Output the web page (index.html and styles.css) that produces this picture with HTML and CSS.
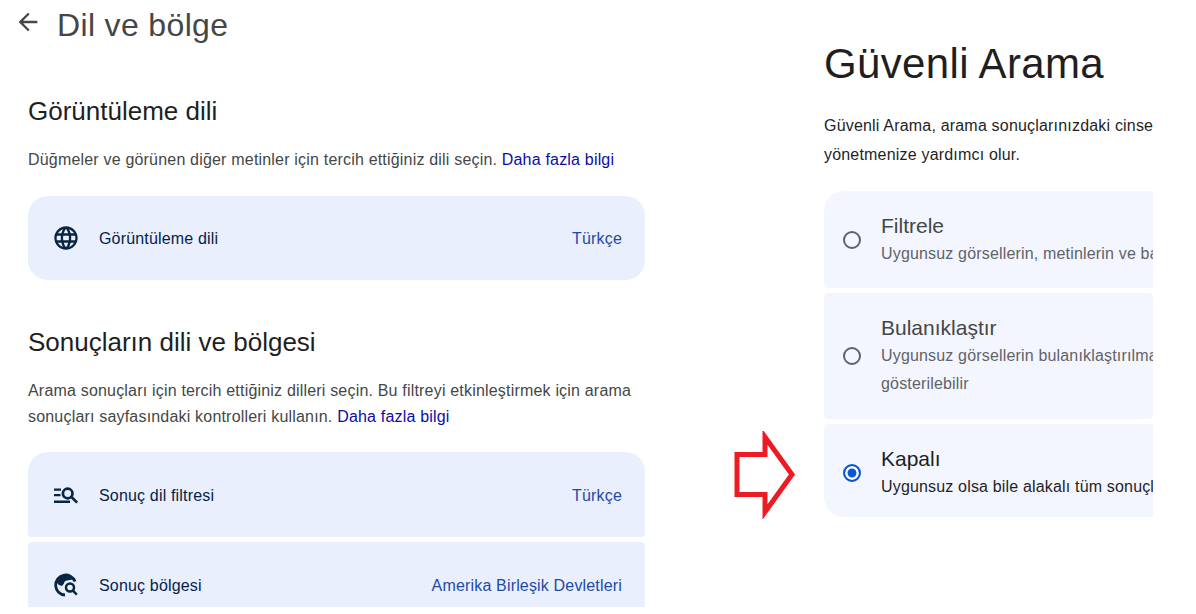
FILE: index.html
```html
<!DOCTYPE html>
<html lang="tr">
<head>
    <meta charset="UTF-8">
    <meta name="viewport" content="width=device-width, initial-scale=1.0">
    <title>Dil ve bölge</title>
    <link rel="stylesheet" href="styles.css">
</head>
<body>

<div class="page">

    <!-- Left: language and region settings -->
    <div class="settings">
        <header class="settings-head">
            <svg class="back-icon" viewBox="0 0 24 24" width="28" height="28"><path d="M20 11H7.830l5.590-5.590L12 4l-8 8 8 8 1.410-1.410L7.830 13H20v-2z"/></svg>
            <h1>Dil ve bölge</h1>
        </header>

        <section class="display-section">
            <h2>Görüntüleme dili</h2>
            <p class="desc">Düğmeler ve görünen diğer metinler için tercih ettiğiniz dili seçin. <a href="#">Daha fazla bilgi</a></p>
            <div class="rows">
                <div class="row row-single">
                    <svg class="row-icon" viewBox="0 0 24 24" width="28" height="28"><path d="M12 2C6.480 2 2 6.480 2 12s4.480 10 10 10 10-4.480 10-10S17.520 2 12 2zm6.930 6h-2.950c-.320-1.250-.780-2.450-1.380-3.560 1.840.630 3.370 1.910 4.330 3.560zM12 4.040c.830 1.200 1.480 2.530 1.910 3.960h-3.820c.430-1.430 1.080-2.760 1.910-3.960zM4.260 14C4.100 13.360 4 12.690 4 12s.100-1.360.260-2h3.380c-.080.660-.140 1.320-.140 2s.060 1.340.140 2H4.260zm.820 2h2.950c.320 1.250.780 2.450 1.380 3.560-1.840-.630-3.370-1.900-4.330-3.560zm2.950-8H5.080c.960-1.660 2.490-2.930 4.330-3.560C8.810 5.550 8.350 6.750 8.030 8zM12 19.960c-.830-1.200-1.480-2.530-1.910-3.960h3.820c-.430 1.430-1.080 2.760-1.910 3.960zM14.340 14H9.660c-.090-.660-.160-1.320-.160-2s.070-1.350.160-2h4.680c.090.650.160 1.320.160 2s-.070 1.340-.160 2zm.250 5.560c.600-1.110 1.060-2.310 1.380-3.560h2.950c-.960 1.650-2.490 2.930-4.330 3.560zM16.360 14c.080-.660.140-1.320.140-2s-.060-1.340-.140-2h3.380c.160.640.260 1.310.260 2s-.100 1.360-.260 2h-3.380z"/></svg>
                    <span class="row-label">Görüntüleme dili</span>
                    <span class="row-value">Türkçe</span>
                </div>
            </div>
        </section>

        <section class="results-section">
            <h2>Sonuçların dili ve bölgesi</h2>
            <p class="desc">Arama sonuçları için tercih ettiğiniz dilleri seçin. Bu filtreyi etkinleştirmek için arama sonuçları sayfasındaki kontrolleri kullanın. <a href="#">Daha fazla bilgi</a></p>
            <div class="rows">
                <div class="row row-first">
                    <svg class="row-icon" viewBox="0 0 28 28" width="28" height="28"><path d="M2 7.500h7v2.300H2zM2 13h6.500v2.300H2zM2 19.500h16v2.500H2z"/><circle cx="15.700" cy="12.500" r="4.800" fill="none" stroke="currentColor" stroke-width="2.700"/><path d="M18.800 17.200l1.900-1.900 5.400 5.400-1.900 1.900z"/></svg>
                    <span class="row-label">Sonuç dil filtresi</span>
                    <span class="row-value">Türkçe</span>
                </div>
                <div class="row">
                    <svg class="row-icon" viewBox="0 0 28 28" width="28" height="28"><path d="M23 10.500A10 10 0 1 0 13 24" fill="none" stroke="currentColor" stroke-width="2.800"/><path d="M6 7.500Q13 1.500 21 8.500L15 9.500Q12.500 9.500 12 12.500L10 15Q6 14 4.500 11.500z"/><circle cx="18" cy="16.500" r="4" fill="none" stroke="currentColor" stroke-width="2.500"/><path d="M20.300 20.800l1.700-1.700 3.700 3.700-1.700 1.700z"/></svg>
                    <span class="row-label">Sonuç bölgesi</span>
                    <span class="row-value">Amerika Birleşik Devletleri</span>
                </div>
            </div>
        </section>
    </div>

    <!-- Red arrow drawn on top of the screenshot -->
    <svg class="arrow" viewBox="0 0 64 88" width="64" height="88"><path d="M4 23.500H32V6L59 43.500 32 81V63.500H4z" fill="none" stroke="#ed1c24" stroke-width="5"/></svg>

    <!-- Right: safe search -->
    <div class="safe">
        <h1>Güvenli Arama</h1>
        <p class="desc safe-desc">Güvenli Arama, arama sonuçlarınızdaki cinsel içerikli görselleri, videoları ve metinleri<br>yönetmenize yardımcı olur.</p>
        <div class="options">
            <div class="option option-first">
                <span class="radio"></span>
                <div class="option-text">
                    <div class="option-title">Filtrele</div>
                    <div class="option-sub">Uygunsuz görsellerin, metinlerin ve bağlantıların filtrelenmesini sağlar</div>
                </div>
            </div>
            <div class="option option-mid">
                <span class="radio"></span>
                <div class="option-text">
                    <div class="option-title">Bulanıklaştır</div>
                    <div class="option-sub">Uygunsuz görsellerin bulanıklaştırılmasını sağlar ancak<br>gösterilebilir</div>
                </div>
            </div>
            <div class="option option-last selected">
                <span class="radio"></span>
                <div class="option-text">
                    <div class="option-title">Kapalı</div>
                    <div class="option-sub">Uygunsuz olsa bile alakalı tüm sonuçları gösterir</div>
                </div>
            </div>
        </div>
    </div>

</div>

</body>
</html>
```

FILE: styles.css
```css
* {
    box-sizing: border-box;
}

body {
    margin: 0;
    background-color: white;
    font-family: "Liberation Sans", Arial, sans-serif;
}

.page {
    position: relative;
    display: flex;
    height: 607px;
    overflow: hidden;
}

h1, h2, p {
    margin: 0;
    font-weight: normal;
}

/* Left column */
.settings {
    width: 824px;
    padding-left: 28px;
    padding-right: 179px;
    flex-shrink: 0;
}

.settings-head {
    display: flex;
    align-items: center;
    height: 50px;
    margin-left: -14px;
}

.back-icon {
    fill: #444746;
    margin-right: 15px;
    margin-top: -7px;
}

.settings-head h1 {
    font-size: 32px;
    letter-spacing: .35px;
    line-height: 50px;
    color: #444746;
}

.display-section {
    padding-top: 45px;
}

.results-section {
    padding-top: 46px;
}

h2 {
    font-size: 26px;
    line-height: 32px;
    color: #1f1f1f;
}

.desc {
    font-size: 16px;
    letter-spacing: .19px;
    line-height: 26px;
    color: #444746;
    margin-top: 20px;
}

.desc a {
    color: #0b0da8;
    text-decoration: none;
}

.rows {
    display: flex;
    flex-direction: column;
    gap: 5px;
    margin-top: 23px;
}

.results-section .rows {
    margin-top: 22px;
}

.row {
    display: flex;
    align-items: center;
    height: 85px;
    padding: 0 23px 0 24px;
    background-color: #e9effd;
    border-radius: 4px;
    color: #041e49;
    font-size: 16px;
    letter-spacing: .17px;
}

.row-single {
    height: 84px;
    border-radius: 20px;
}

.row-first {
    border-radius: 20px 20px 4px 4px;
}

.row-icon {
    color: #0a2540;
    fill: currentColor;
    margin-right: 19px;
    flex-shrink: 0;
}

.row-label {
    flex: 1;
    padding-top: 2px;
}

.row-value {
    padding-top: 2px;
    color: #1f4aa8;
}

/* Right column */
.safe {
    width: 329px;
    overflow: hidden;
    flex-shrink: 0;
}

.safe h1 {
    font-size: 42px;
    letter-spacing: .35px;
    line-height: 52px;
    color: #1f1f1f;
    margin-top: 38px;
}

.safe-desc {
    margin-top: 21px;
    line-height: 29px;
    white-space: nowrap;
    color: #1f1f1f;
}

.options {
    display: flex;
    flex-direction: column;
    gap: 5px;
    margin-top: 22px;
}

.option {
    display: flex;
    align-items: center;
    width: 329px;
    background-color: #f4f6ff;
    border-radius: 4px;
    padding-left: 19px;
}

.option-first {
    height: 97px;
    border-radius: 20px 0 0 4px;
}

.option-mid {
    height: 126px;
}

.option-last {
    height: 93px;
    padding-top: 4px;
    border-radius: 4px 0 0 20px;
}

.radio {
    width: 18px;
    height: 18px;
    border: 2px solid #5f6368;
    border-radius: 50%;
    flex-shrink: 0;
    margin-right: 20px;
}

.option-text {
    min-width: 0;
    flex: 1;
    padding-top: 1px;
}

.option-title {
    font-size: 21px;
    line-height: 26px;
    margin-bottom: 1px;
    color: #444746;
}

.option-sub {
    font-size: 16px;
    letter-spacing: .17px;
    line-height: 28px;
    white-space: nowrap;
    color: #5f6368;
}

.selected .radio {
    border-color: #0b57d0;
    background-color: #0b57d0;
    box-shadow: inset 0 0 0 2.500px white;
}

.selected .option-title,
.selected .option-sub {
    color: #1f1f1f;
}

.arrow {
    position: absolute;
    left: 733px;
    top: 431px;
}
```
